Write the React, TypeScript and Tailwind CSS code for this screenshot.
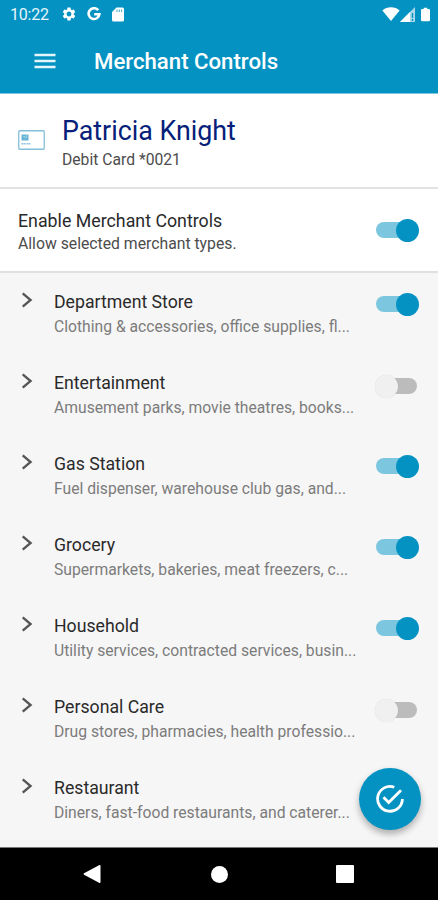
import clsx from "clsx";
import { MdSettings } from "react-icons/md";

type Merchant = {
  name: string;
  description: string;
  enabled: boolean;
};

const merchants: Merchant[] = [
  { name: "Department Store", description: "Clothing & accessories, office supplies, fl...", enabled: true },
  { name: "Entertainment", description: "Amusement parks, movie theatres, books...", enabled: false },
  { name: "Gas Station", description: "Fuel dispenser, warehouse club gas, and...", enabled: true },
  { name: "Grocery", description: "Supermarkets, bakeries, meat freezers, c...", enabled: true },
  { name: "Household", description: "Utility services, contracted services, busin...", enabled: true },
  { name: "Personal Care", description: "Drug stores, pharmacies, health professio...", enabled: false },
  { name: "Restaurant", description: "Diners, fast-food restaurants, and caterer...", enabled: true },
];

function Toggle({ on }: { on: boolean }) {
  return (
    <button
      type="button"
      role="switch"
      aria-checked={on}
      className={clsx("flex h-6 w-[45px] shrink-0 items-center", on ? "justify-end" : "justify-start")}
    >
      <span
        className={clsx(
          "flex h-4 w-[41px] items-center rounded-full",
          on ? "mr-0.5 justify-end bg-[#7cc7df]" : "ml-0.5 mt-0.5 justify-start bg-[#bcbcbc]",
        )}
      >
        <span
          className={clsx(
            "size-[23px] shrink-0 rounded-full",
            on ? "-mr-0.5 bg-[#0492c2]" : "-ml-px bg-[#f0f0f0] shadow-[0_0_1px_rgba(0,0,0,0.15)]",
          )}
        />
      </span>
    </button>
  );
}

function StatusBar() {
  return (
    <div className="flex h-7 items-center pl-[10px] pr-[8px] text-white">
      <span className="w-[51px] pt-px text-[16px] leading-7 tracking-[-0.2px] text-[#e4f6fc]">10:22</span>
      <MdSettings className="size-4" />
      <svg viewBox="0 0 14 14" className="ml-[10px] size-[14px]" fill="none">
        <path d="M11.2 3.2A5.4 5.4 0 1 0 12.4 7.2H7.2" stroke="currentColor" strokeWidth="2.6" />
      </svg>
      <svg viewBox="0 0 12 15" className="ml-[11px] h-[15px] w-3" fill="currentColor">
        <path d="M4.5 0.5H10.5Q12 .5 12 2V13Q12 14.5 10.5 14.5H1.5Q0 14.5 0 13V5Z" />
        <path d="M5 2.5V5M7.3 2.5V5M9.6 2.5V5" stroke="#0492c2" strokeWidth="0.8" />
      </svg>
      <div className="ml-auto flex items-center">
        <svg viewBox="0 0 18 14" className="h-[14px] w-[18px]" fill="currentColor">
          <path d="M9 14L.4 3.4C5 -.9 13 -.9 17.6 3.4Z" />
        </svg>
        <svg viewBox="0 0 15 15" className="size-[15px]">
          <path d="M15 0V15H0Z" fill="#a9d9ea" />
          <path d="M10 5V15H0Z" fill="#fff" />
          <path d="M12.5 6V11M12.5 12V14" stroke="#0492c2" strokeWidth="1.4" />
        </svg>
        <svg viewBox="0 0 10 15" className="ml-[6px] h-[15px] w-[9px]" fill="currentColor">
          <path d="M3 0H7V1.4H8.6Q10 1.4 10 2.8V13.6Q10 15 8.6 15H1.4Q0 15 0 13.6V2.8Q0 1.4 1.4 1.4H3Z" />
        </svg>
      </div>
    </div>
  );
}

function CardIcon() {
  return (
    <svg viewBox="0 0 27 20" className="-mt-px h-5 w-[27px] shrink-0" fill="none">
      <rect x="0.75" y="0.75" width="25.5" height="18.5" rx="1" stroke="#83bfda" strokeWidth="1.3" />
      <rect x="3.5" y="4.5" width="7" height="6" rx="0.5" fill="#65b4d5" />
      <path d="M5 6.5h2v2M8.5 5v3" stroke="#b6dbea" strokeWidth="0.7" />
      <path d="M3.5 13.8h4M8.5 13.8h4.3" stroke="#87c1db" strokeWidth="1.5" strokeDasharray="1.7 .5" />
    </svg>
  );
}

function MerchantRow({ merchant }: { merchant: Merchant }) {
  return (
    <li className="flex h-[81px] items-start pl-[21px] pr-[19px]">
      <svg viewBox="0 0 12 16" className="mt-[19px] h-4 w-3 shrink-0" fill="none">
        <path d="M1.7 1.3L9.6 8L1.7 14.7" stroke="#555" strokeWidth="2.3" />
      </svg>
      <div className="ml-[21px] flex-1 pt-[17px]">
        <h3 className="text-[17.7px] leading-6 text-[#2a2a2a]">{merchant.name}</h3>
        <p className="mt-px whitespace-nowrap text-[15.7px] leading-6 text-[#7c7c7c]">{merchant.description}</p>
      </div>
      <div className="mt-[19px]">
        <Toggle on={merchant.enabled} />
      </div>
    </li>
  );
}

export default function App() {
  return (
    <div className="relative flex h-[900px] w-[438px] flex-col overflow-hidden bg-[#f6f6f6] font-[Roboto,sans-serif]">
      <header className="h-[94px] shrink-0 border-b border-[#7cc7df] bg-[#0492c2]">
        <StatusBar />
        <div className="flex h-[65px] items-center pl-[34px] text-white">
          <svg viewBox="0 0 22 16" className="h-4 w-[22px]" fill="none">
            <path d="M0.5 2H21.5M0.5 8H21.5M0.5 14H21.5" stroke="#e4f6fc" strokeWidth="2.5" />
          </svg>
          <h1 className="ml-[38px] pt-px text-[22.2px] font-medium leading-7">Merchant Controls</h1>
        </div>
      </header>

      <section className="flex h-[95px] shrink-0 items-center border-b-2 border-[#e2e2e2] bg-white pl-[18px]">
        <CardIcon />
        <div className="ml-[17px] pt-[6px]">
          <h2 className="text-[26.8px] leading-8 text-[#06207a]">Patricia Knight</h2>
          <p className="pt-px text-[15.7px] leading-6 text-[#4c4c4c]">Debit Card *0021</p>
        </div>
      </section>

      <section className="flex h-[84px] shrink-0 items-center justify-between border-b-2 border-[#e0e0e0] bg-white pl-[18px] pr-[19px]">
        <div className="pt-[4px]">
          <h3 className="text-[17.8px] leading-6 text-[#2a2a2a]">Enable Merchant Controls</h3>
          <p className="text-[15.75px] leading-[22px] text-[#4c4c4c]">Allow selected merchant types.</p>
        </div>
        <Toggle on />
      </section>

      <ul className="min-h-0 flex-1 overflow-hidden">
        {merchants.map((merchant) => (
          <MerchantRow key={merchant.name} merchant={merchant} />
        ))}
      </ul>

      <button
        type="button"
        aria-label="Save"
        className="absolute left-[359px] top-[768px] flex size-[62px] items-center justify-center rounded-full bg-[#0492c2] text-white shadow-[0_4px_7px_rgba(0,0,0,0.3)]"
      >
        <svg viewBox="0 0 30 30" className="size-[30px]" fill="none" stroke="currentColor" strokeWidth="2.8">
          <path d="M19.3 3.2A12.4 12.4 0 1 0 27.4 15" />
          <path d="M8.5 13.3L13.7 18.5L26 6.2" />
        </svg>
      </button>

      <nav className="flex h-[53px] shrink-0 items-center justify-between border-t border-[#777] bg-black pl-[83px] pr-[84px]">
        <svg viewBox="0 0 18 20" className="h-5 w-[18px]" fill="#fff">
          <path d="M17.5 2Q17.5 .5 16 1.2L1 9.2Q0 10 1 10.8L16 18.8Q17.5 19.5 17.5 18Z" />
        </svg>
        <span className="ml-0.5 size-[17px] rounded-full bg-white" />
        <span className="size-[18px] rounded-[1px] bg-white" />
      </nav>
    </div>
  );
}
